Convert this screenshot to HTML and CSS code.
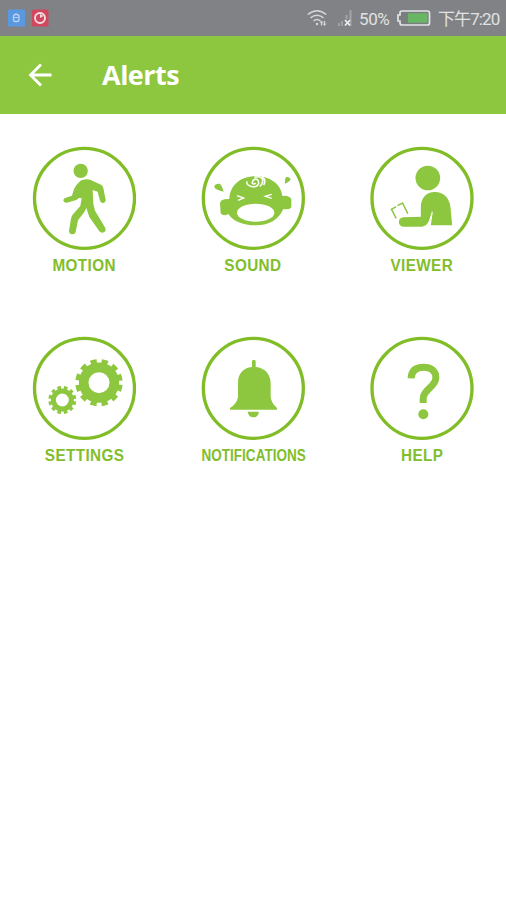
FILE: index.html
```
<!DOCTYPE html>
<html lang="en">
<head>
<meta charset="utf-8">
<title>Alerts</title>
<link rel="stylesheet" href="styles.css">
</head>
<body>
<div class="status">
  <svg class="apps" width="42" height="18" viewBox="0 0 42 18">
    <rect x="0" y="0.5" width="17" height="17" rx="1" fill="#5b98e2"/>
    <rect x="5.5" y="5.5" width="5.5" height="7" rx="2" fill="none" stroke="#b9d3f3" stroke-width="1.3"/>
    <path d="M6 8.5h4.500M8 4v2" stroke="#b9d3f3" stroke-width="1"/>
    <rect x="24" y="0.500" width="16.500" height="17" rx="1.500" fill="#d0475e"/>
    <circle cx="32" cy="9" r="5" fill="none" stroke="#f6dde1" stroke-width="1.900"/>
    <path d="M32 9V5l3.500 2z" fill="#f6dde1"/>
  </svg>
  <svg class="wifi" width="21" height="18" viewBox="0 0 21 18" fill="none" stroke="#d5d6d8" stroke-width="1.500">
    <path d="M.8 5.500Q10 -2 19.200 5.500M3.500 8.800Q10 3.500 16.500 8.800M6.500 12Q10 9 13.500 12"/>
    <circle cx="10" cy="15" r="1.200" fill="#d5d6d8" stroke="none"/>
    <path d="M14.500 12v4.500M17.500 12v4.500" stroke-width="1.300"/>
    <path d="M13 14l1.500-2 1.500 2M16 14.500l1.500 2 1.500-2" stroke-width=".8"/>
  </svg>
  <svg class="signal" width="15" height="18" viewBox="0 0 15 18">
    <path d="M1 14v3M4 12v5" stroke="#a9abad" stroke-width="1.500"/>
    <path d="M8.500 6v4M12.500 1v16" stroke="#a2a4a6" stroke-width="2"/>
    <path d="M7 11l5 5.500M12 11l-5 5.500" stroke="#eeeeef" stroke-width="1.700"/>
  </svg>
  <span class="percent">50%</span>
  <svg class="battery" width="34" height="16" viewBox="0 0 34 16">
    <path d="M5 1h25.500q2 0 2 2v10q0 2-2 2H5q-2 0-2-2v-2H1V5h2V3q0-2 2-2z" fill="#7b7e81" stroke="#e3e4e5" stroke-width="1.700"/>
    <rect x="11" y="3.300" width="19.500" height="9.400" fill="#68b765"/>
  </svg>
  <span class="clock">下午7:20</span>
</div>
<header class="bar">
  <svg class="back" width="24" height="24" viewBox="0 0 24 24" fill="none" stroke="#fff" stroke-width="2.800">
    <path d="M23.500 12H2.500M13 1.500L2.500 12 13 22.500"/>
  </svg>
  <h1>Alerts</h1>
</header>
<main class="grid">
  <div class="tile">
    <svg class="icon" viewBox="24 18 312 312">
      <circle class="ring" cx="181.500" cy="175" r="150"/>
      <circle cx="170" cy="92.500" r="21.500"/>
      <path d="M166 126Q172 118 188 118Q199 118 208 124L231 134Q236 137 238 144L245 180Q245 188 237 189Q230 189 228 182L221 155L206 150L208 192L213 212L244 264Q247 273 240 277Q232 281 226 274L196 231L187 204L181 216L162 241L155 276Q153 284 144 283Q135 281 135 272L141 236Q142 229 147 223L169 198L173 175L164 174Q160 180 154 181L129 188Q121 189 118 182Q118 176 123 174L144 167L150 147Q154 136 166 126Z"/>
    </svg>
    <span class="label">MOTION</span>
  </div>
  <div class="tile">
    <svg class="icon" viewBox="21 18 312 312">
      <circle class="ring" cx="178" cy="175" r="150"/>
      <path d="M106 177C108 136 139 109 185 109C231 109 262 135 265 168Q286 165 292 178V201Q288 210 268 207C255 237 228 256 185 256C145 256 117 243 103 222Q88 230 80 220L78 190Q79 176 106 177Z"/>
      <path d="M61 137Q65 130 77 131Q83 134 89 155Q65 149 62 143Z"/>
      <path d="M276 111Q287 110 290 117Q289 124 273 131Q272 117 276 111Z"/>
      <ellipse cx="185" cy="218" rx="56" ry="27" fill="#fff"/>
      <path class="line" d="M129 167L149 174L132 181M233 163L214 169L233 175" stroke-width="4"/>
      <path class="line" d="M159 124Q156 137 175 140Q190 143 194 130Q194 117 184 117Q174 120 175 130Q180 135 185 129M181 112Q203 106 206 121Q207 133 197 139M204 111Q218 120 209 135" stroke-width="4.500"/>
    </svg>
    <span class="label">SOUND</span>
  </div>
  <div class="tile">
    <svg class="icon" viewBox="24.500 18 312 312">
      <circle class="ring" cx="180.500" cy="175" r="150"/>
      <circle cx="198" cy="114" r="37"/>
      <path d="M177 230V202C177 174 193 156 219 156C247 156 263 175 266 202L271 256H207L213 215L210 215L202 241Q196 258 180 260H123Q111 257 111 245Q113 233 125 232Z"/>
      <path class="stroke" d="M103 235L89 208L103 200M107 197L122 189L138 221" stroke-width="4.500"/>
    </svg>
    <span class="label">VIEWER</span>
  </div>
  <div class="tile">
    <svg class="icon" viewBox="24 18 312 312">
      <circle class="ring" cx="181.500" cy="175" r="150"/>
      <circle class="stroke" cx="225" cy="158" r="46" stroke-width="29"/>
      <circle class="stroke" cx="225" cy="158" r="64.500" stroke-width="13" pathLength="240" stroke-dasharray="11 9" stroke-dashoffset="-4"/>
      <circle class="stroke" cx="115" cy="210" r="27" stroke-width="15"/>
      <circle class="stroke" cx="115" cy="210" r="37.500" stroke-width="9" pathLength="240" stroke-dasharray="11 9" stroke-dashoffset="-4"/>
    </svg>
    <span class="label">SETTINGS</span>
  </div>
  <div class="tile">
    <svg class="icon" viewBox="21 18 312 312">
      <circle class="ring" cx="178" cy="175" r="150"/>
      <path d="M174 111V94Q174 89 180 89Q185 89 185 94V111C214 114 229 133 230 159V198Q230 218 249 234V239H108V234Q130 219 132 200V158C132 131 148 114 174 111Z"/>
      <path d="M161 245H195Q192 262 178 262Q164 262 161 245Z"/>
    </svg>
    <span class="label narrow">NOTIFICATIONS</span>
  </div>
  <div class="tile">
    <svg class="icon" viewBox="24.500 18 312 312">
      <circle class="ring" cx="180.500" cy="175" r="150"/>
      <path class="stroke" d="M148 145C149 121 163 112 185 112C208 112 222 123 222 143C222 171 184 178 184 206V219" stroke-width="21"/>
      <circle cx="184.500" cy="253" r="15"/>
    </svg>
    <span class="label">HELP</span>
  </div>
</main>
</body>
</html>
```
FILE: styles.css
```
* {
  box-sizing: border-box;
}

body {
  margin: 0;
  min-height: 900px;
  background: #fff;
  font-family: "Liberation Sans", sans-serif;
}

.status {
  display: flex;
  align-items: center;
  height: 36px;
  padding: 0 6px 0 8px;
  background: #808285;
  color: #e1e2e3;
  font-family: Roboto, "Noto Sans CJK SC", sans-serif;
  font-size: 17px;
  line-height: 20px;
  white-space: nowrap;
}

.apps {
  margin-right: auto;
}

.signal {
  margin: 0 6px 0 10px;
}

.percent {
  width: 31px;
  padding-top: 2px;
  letter-spacing: -0.4px;
}

.battery {
  margin: 0 7px;
}

.clock {
  width: 62px;
  padding-top: 2px;
  letter-spacing: -0.9px;
}

.bar {
  display: flex;
  align-items: center;
  height: 78px;
  padding: 0 0 0 28px;
  background: #8dc63f;
  color: #fff;
}

.bar h1 {
  margin: 0 0 0 50px;
  font: 700 27px/36px "Open Sans", sans-serif;
  letter-spacing: -0.5px;
}

.grid {
  display: grid;
  grid-template-columns: repeat(3, 168.8px);
  grid-auto-rows: 190px;
  padding-top: 32px;
}

.tile {
  display: flex;
  flex-direction: column;
  align-items: center;
}

.icon {
  width: 104px;
  height: 104px;
  fill: #8dc63f;
}

.ring {
  fill: none;
  stroke: #81bd26;
  stroke-width: 10;
}

.stroke {
  fill: none;
  stroke: #8dc63f;
}

.line {
  fill: none;
  stroke: #fff;
}

.label {
  margin-top: 7px;
  color: #82be2b;
  font-size: 16px;
  font-weight: 700;
  line-height: 18px;
  letter-spacing: 0.4px;
  transform: scaleX(0.955);
}

.narrow {
  letter-spacing: 0;
  transform: scaleX(0.845);
}
```
